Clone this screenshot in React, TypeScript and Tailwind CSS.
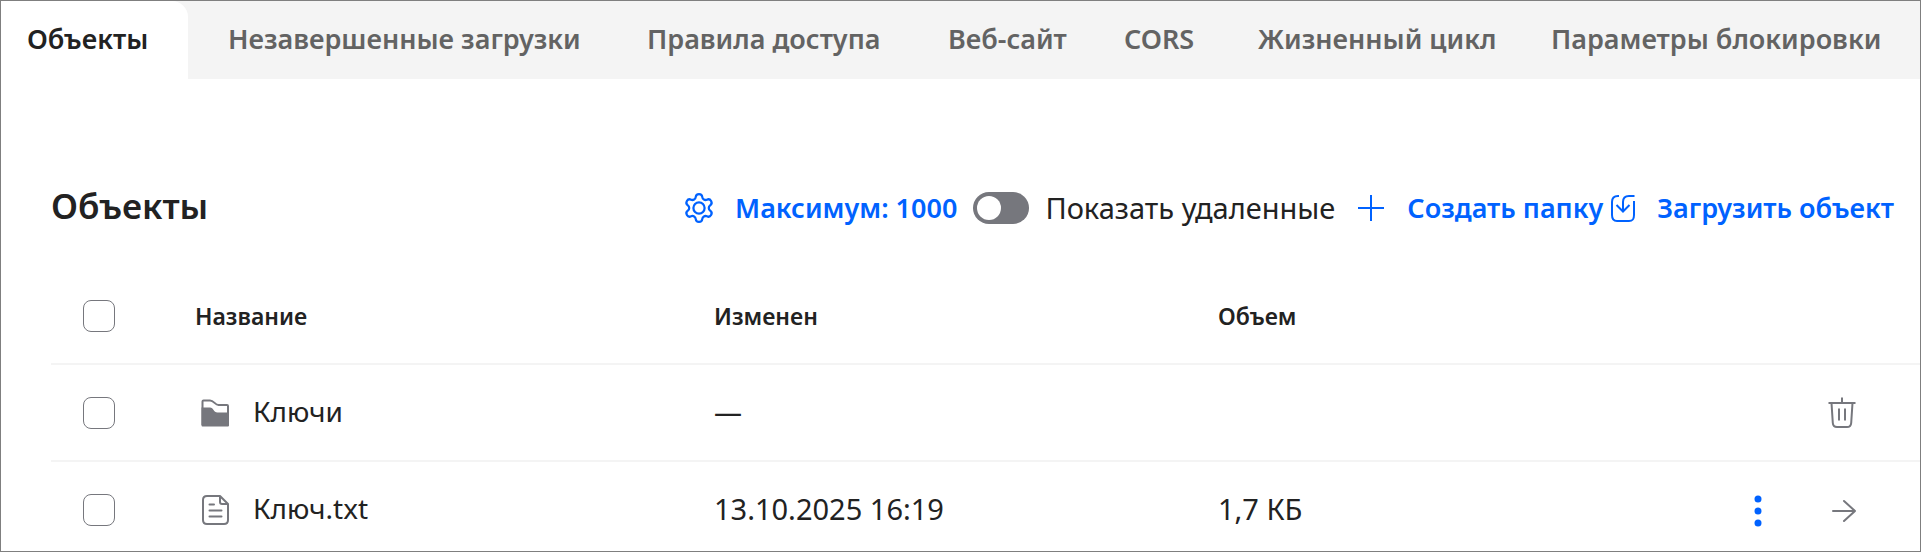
import type { ReactNode } from "react";

const tabs = [
  "Незавершенные загрузки",
  "Правила доступа",
  "Веб-сайт",
  "CORS",
  "Жизненный цикл",
  "Параметры блокировки",
];

const GearIcon = () => (
  <svg viewBox="2 1 20 22" className="w-7 h-8 shrink-0 overflow-visible" fill="none" stroke="currentColor" strokeWidth="1.600" strokeLinecap="round" strokeLinejoin="round">
    <path d="M9.671 4.136a2.34 2.34 0 0 1 4.659 0 2.34 2.34 0 0 0 3.319 1.915 2.34 2.34 0 0 1 2.33 4.033 2.34 2.34 0 0 0 0 3.831 2.34 2.34 0 0 1-2.33 4.033 2.34 2.34 0 0 0-3.319 1.915 2.34 2.34 0 0 1-4.659 0 2.34 2.34 0 0 0-3.32-1.915 2.34 2.34 0 0 1-2.33-4.033 2.34 2.34 0 0 0 0-3.831A2.34 2.34 0 0 1 6.350 6.051a2.34 2.34 0 0 0 3.319-1.915" />
    <circle cx="12" cy="12" r="4" />
  </svg>
);

const PlusIcon = () => (
  <svg viewBox="0 0 28 28" className="size-7 shrink-0" fill="none" stroke="currentColor" strokeWidth="2">
    <path d="M14 1v26M1 14h26" />
  </svg>
);

const UploadIcon = () => (
  <svg viewBox="0 0 24 28" className="w-6 h-7 shrink-0" fill="none" stroke="currentColor" strokeWidth="2">
    <path d="M8 2H7C3 2 1 4 1 8v13c0 4 1 6 5 6h12c4 0 5-2 5-6V7" />
    <path d="M23.500 2H18c-4 0-6 2-6 6v9.500M5.500 11l6.500 6.500 6.500-6.500" />
  </svg>
);

const FolderIcon = () => (
  <svg viewBox="0 0 28 28" className="size-7 shrink-0" fill="none">
    <path d="M1.500 26V2.500q0-1 1-1H9c4 0 5 4.500 8.500 4.500H26q1 0 1 1v19" stroke="#76777d" strokeWidth="2" />
    <path d="M.5 8.500H9c3.500 0 3.500 5 7.500 5H28v13q0 1-1 1H1.500q-1 0-1-1z" fill="#76777d" />
  </svg>
);

const FileIcon = () => (
  <svg viewBox="0 0 28 32" className="w-7 h-8 shrink-0" fill="none" stroke="#76777d" strokeWidth="2" strokeLinecap="round" strokeLinejoin="round">
    <path d="M19 2H6C3 2 2 3 2 6v20c0 3 1 4 4 4h17c3 0 4-1 4-4V10zM19 2v6q0 2 2 2h6M8.500 10.500H13M8.500 16.500h12M8.500 22.500h12" />
  </svg>
);

const TrashIcon = () => (
  <svg viewBox="0 0 28 32" className="w-7 h-8" fill="none" stroke="currentColor" strokeWidth="2">
    <path d="M14 .5V6M.5 6h27M3.500 6l1.300 20c.2 3 1.500 4 4.200 4h10c2.700 0 4-1 4.200-4L24.500 6M11 11.500v12M17 11.500v12" />
  </svg>
);

const ArrowIcon = () => (
  <svg viewBox="0 0 24 24" className="size-6" fill="none" stroke="currentColor" strokeWidth="2" strokeLinecap="round" strokeLinejoin="round">
    <path d="M1 12h22M12 2l11 10-11 10" />
  </svg>
);

const DotsIcon = () => (
  <svg viewBox="0 0 8 32" className="w-2 h-8" fill="#0062ff">
    <circle cx="4" cy="4" r="3.500" />
    <circle cx="4" cy="16" r="3.500" />
    <circle cx="4" cy="28" r="3.500" />
  </svg>
);

const Check = ({ label }: { label: string }) => (
  <input
    type="checkbox"
    aria-label={label}
    className="block ml-8 size-8 appearance-none rounded-lg border border-[#76777d] bg-white checked:bg-[#0062ff]"
  />
);

const LinkButton = ({ icon, children }: { icon: ReactNode; children: ReactNode }) => (
  <button type="button" className="flex items-center gap-[22px] text-[27px] font-semibold text-[#0062ff] whitespace-nowrap">
    {icon}
    {children}
  </button>
);

export default function App() {
  return (
    <div className="border border-[#7f7f7f] bg-white font-['Noto_Sans',sans-serif] text-[28px] leading-9 text-[#222222]">
      <nav className="grid grid-cols-[187fr_419fr_301fr_176fr_134fr_293fr_409fr] h-[78px] bg-[#f4f4f4] text-[27px] font-semibold text-[#636363]">
        <button type="button" className="pl-[26px] pb-0.5 rounded-tr-2xl bg-white text-left text-[#222222]">
          Объекты
        </button>
        {tabs.map((t) => (
          <button key={t} type="button" className="pl-10 pb-0.5 text-left whitespace-nowrap">
            {t}
          </button>
        ))}
      </nav>

      <div className="flex items-center justify-between mt-[101px] pl-[50px] pr-[26px] h-14">
        <h1 className="pb-1 text-[35px] font-semibold">Объекты</h1>
        <div className="flex items-center">
          <LinkButton icon={<GearIcon />}>Максимум: 1000</LinkButton>
          <label className="flex items-center gap-4 ml-4 mr-[22px] text-[29px] whitespace-nowrap">
            <input
              type="checkbox"
              role="switch"
              className="w-14 h-8 shrink-0 appearance-none rounded-full bg-[#76777d] p-1 before:block before:size-6 before:rounded-full before:bg-white checked:bg-[#0062ff] checked:before:ml-6"
            />
            Показать удаленные
          </label>
          <LinkButton icon={<PlusIcon />}>Создать папку</LinkButton>
          <div className="ml-2">
            <LinkButton icon={<UploadIcon />}>Загрузить объект</LinkButton>
          </div>
        </div>
      </div>

      <div className="mt-8 pl-[50px]">
        <table className="w-full table-fixed text-left">
          <colgroup>
            <col className="w-36" />
            <col className="w-[519px]" />
            <col className="w-[504px]" />
            <col />
            <col className="w-60" />
          </colgroup>
          <thead>
            <tr className="h-24 border-b-2 border-[#f4f4f4] text-[23px]">
              <th><Check label="Выбрать все" /></th>
              <th className="font-semibold">Название</th>
              <th className="font-semibold">Изменен</th>
              <th className="font-semibold">Объем</th>
              <td />
            </tr>
          </thead>
          <tbody>
            <tr className="h-[97px] border-b-2 border-[#f4f4f4]">
              <td><Check label="Ключи" /></td>
              <td>
                <div className="flex items-center gap-6 pl-1.5">
                  <FolderIcon />
                  <span className="pb-1">Ключи</span>
                </div>
              </td>
              <td className="pb-1">—</td>
              <td />
              <td>
                <div className="flex items-center justify-end pr-16 text-[#76777d]">
                  <button type="button" aria-label="Удалить"><TrashIcon /></button>
                </div>
              </td>
            </tr>
            <tr className="h-[90px]">
              <td className="pt-1.5"><Check label="Ключ.txt" /></td>
              <td className="pt-1.5">
                <div className="flex items-center gap-6 pl-1.5">
                  <FileIcon />
                  <span className="pb-1">Ключ.txt</span>
                </div>
              </td>
              <td className="pt-1 text-[29px]">13.10.2025 16:19</td>
              <td className="pt-1 text-[29px]">1,7 КБ</td>
              <td className="pt-2">
                <div className="flex items-center justify-end gap-[70px] pr-16 text-[#76777d]">
                  <button type="button" aria-label="Действия"><DotsIcon /></button>
                  <button type="button" aria-label="Открыть"><ArrowIcon /></button>
                </div>
              </td>
            </tr>
          </tbody>
        </table>
      </div>
    </div>
  );
}
